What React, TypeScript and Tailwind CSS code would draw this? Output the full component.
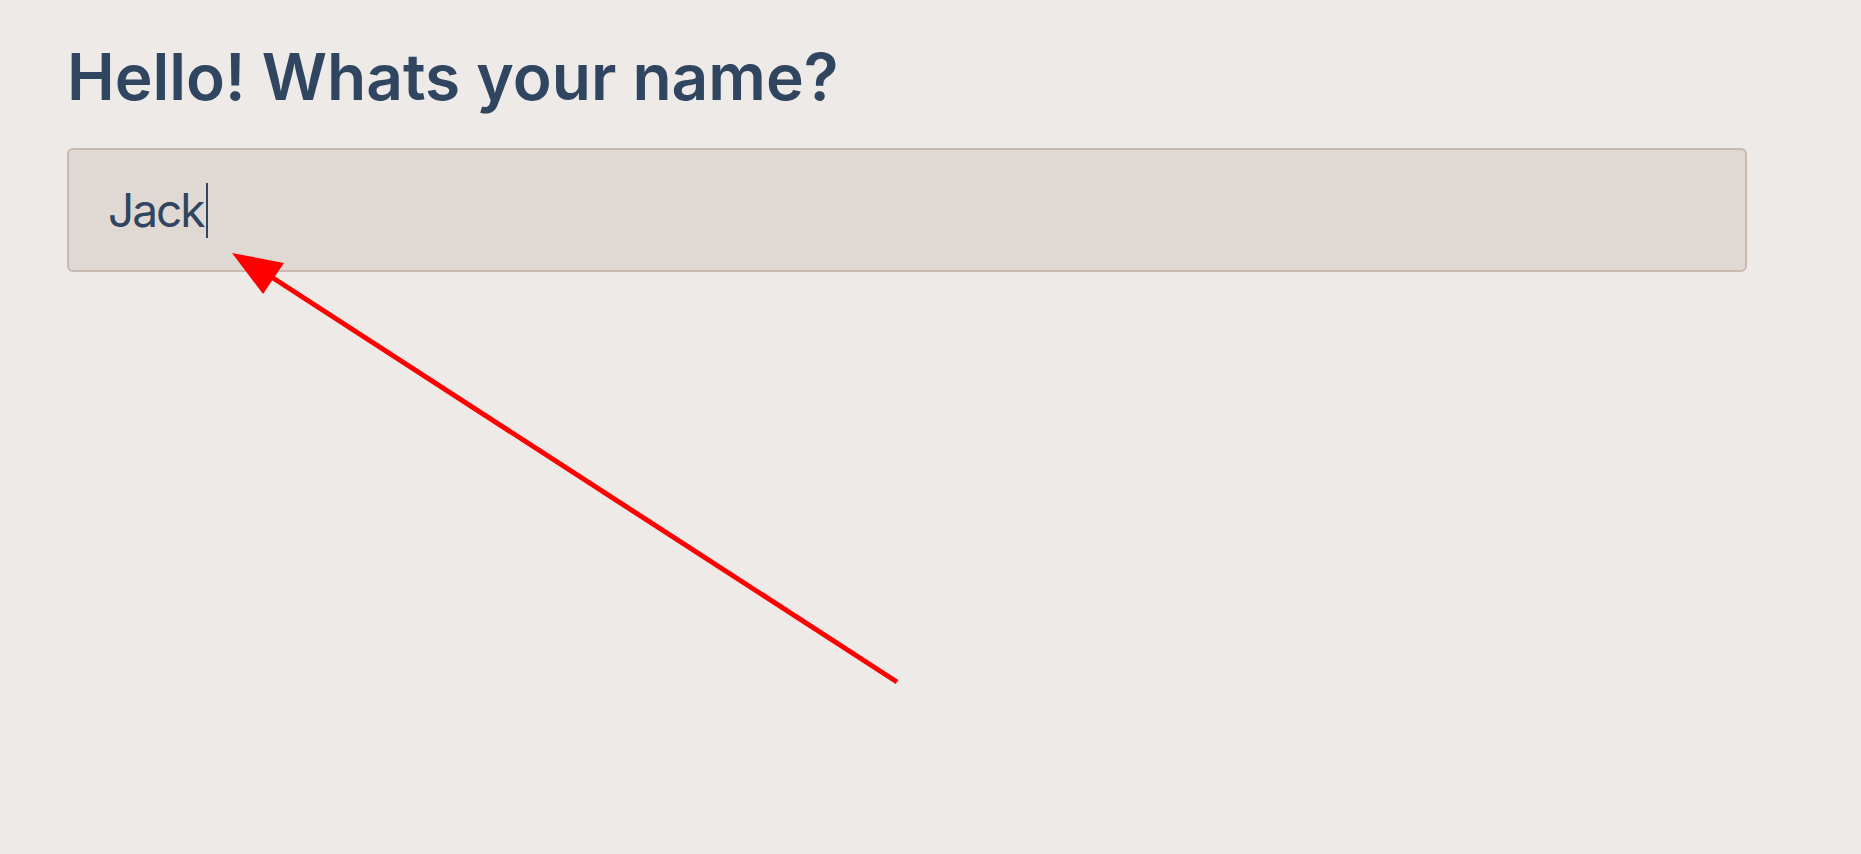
export default function App() {
  return (
    <main className="relative min-h-screen bg-[#eeeae7] pl-[67px] pt-[45px] font-['Inter',sans-serif] text-[#2f4560]">
      <h1 className="text-[64px] font-semibold leading-[64px]">
        Hello! Whats your name?
      </h1>

      <div className="mt-[39px] flex h-[124px] w-[1680px] items-center rounded-md border-2 border-[#c9b9ae] bg-[#e0d8d3] pl-[39px]">
        <span className="text-[46px] leading-none tracking-[-2px]">Jack</span>
        <span className="ml-[2px] h-[55px] w-[2px] bg-[#2f4560]" />
      </div>

      {/* annotation arrow */}
      <svg
        className="pointer-events-none absolute inset-0"
        width="1861"
        height="854"
        viewBox="0 0 1861 854"
      >
        <line
          x1="897"
          y1="682"
          x2="270"
          y2="276"
          stroke="#ff0000"
          strokeWidth="5"
        />
        <polygon points="232,253 284,263 263,294" fill="#ff0000" />
      </svg>
    </main>
  );
}
